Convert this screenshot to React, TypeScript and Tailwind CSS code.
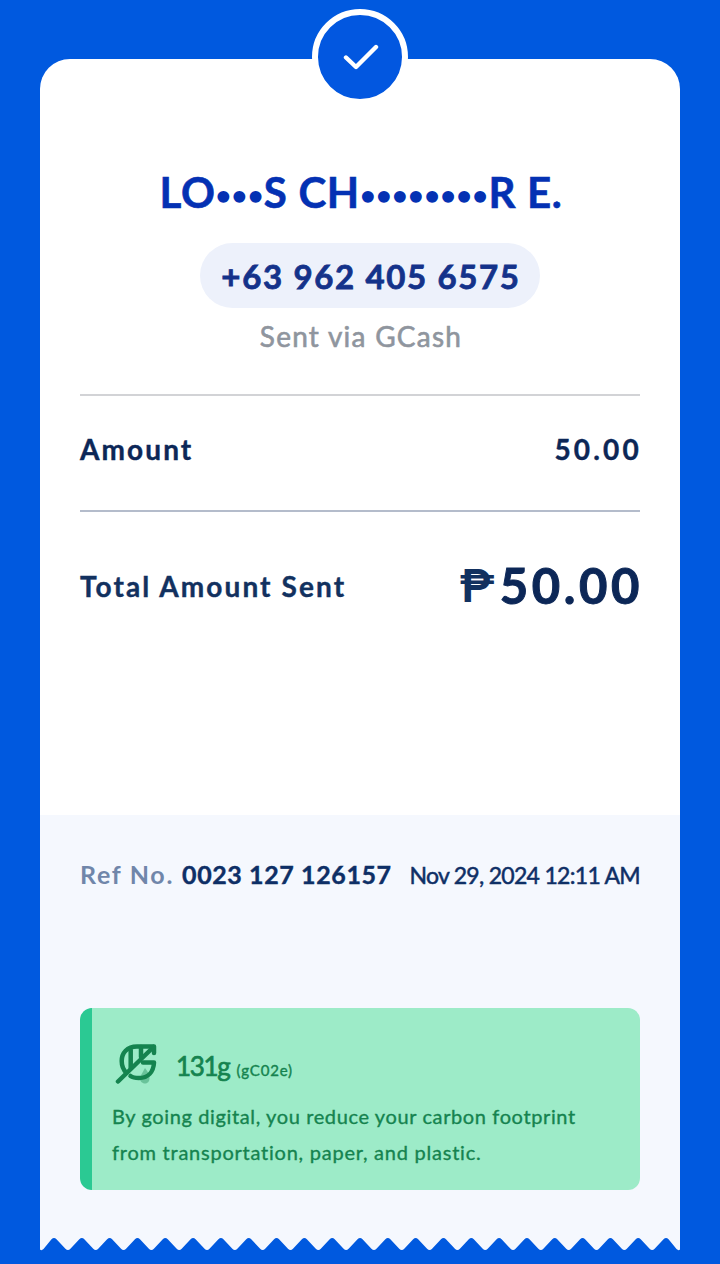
const TOOTH = 27.82

// torn paper edge, teeth with slightly rounded tips
function tearPath() {
    let d = 'M0 0H640V11.5Q638.5 13 636.5 11'
    for (let i = 22; i >= 0; i--) {
        const x = 14 + i * TOOTH
        d += `L${x + 2.5} 1.2Q${x} -1 ${x - 2.5} 1.2`
        if (i > 0) {
            d += `L${x - 11.4} 10.8Q${x - 13.9} 13.2 ${x - 16.4} 10.8`
        }
    }
    return d + 'L3.5 11Q1.5 13 0 11.5Z'
}

function Divider({ className }: { className: string }) {
    return <div className={`h-[2px] w-full ${className}`} />
}

function MaskDots({ count }: { count: number }) {
    return <span className="text-[27px] leading-none tracking-[0.4px] align-[3.500px] [-webkit-text-stroke:0px]">{'•'.repeat(count)}</span>
}

function CheckBadge() {
    return (
        <div className="absolute left-1/2 -top-[50px] -translate-x-1/2 w-24 h-24 rounded-full border-[6px] border-white bg-[#0257e0] flex items-center justify-center">
            <svg className="ml-0.5" width="36" height="26" viewBox="0 0 36 26" fill="none" stroke="white" strokeWidth="4.4" strokeLinecap="round" strokeLinejoin="round">
                <path d="M3 13.5L13 23L33 3" />
            </svg>
        </div>
    )
}

function LeafIcon() {
    return (
        <svg className="ml-[3px]" width="44" height="44" viewBox="0 0 44 44" fill="none" stroke="#15834f" strokeWidth="4.5" strokeLinecap="round" strokeLinejoin="round">
            <path d="M30 26C33 30 34.500 32 34.500 36C34.500 39 33 41.500 30 41.500C27 41.500 25 39 24.500 36Z" fill="#15834f" fillOpacity=".38" stroke="none" />
            <path d="M3 39.500L38.500 5" />
            <path d="M39 11V4.500H22C12 4.500 6.700 11 6.700 19C6.700 24 8.500 28 11.500 31" />
            <path d="M28 20.500H39C38.500 30 33 36 24 36C20 36 17.500 35.500 15.500 34" />
            <path d="M15.700 8V26M26 5V15" />
        </svg>
    )
}

export default function App() {
    return (
        <div className="w-[720px] h-[1264px] bg-[#0059df] px-10 pt-[59px] font-['Lato','Liberation_Sans',sans-serif] overflow-hidden">
            <div className="relative bg-white rounded-t-[30px] h-[756px] px-10 pt-[107px] [stroke-linejoin:round]">
                <CheckBadge />
                <div className="flex flex-col items-center">
                    <h1 className="ml-0.5 h-[52px] text-[42px] leading-[52px] font-bold tracking-[0.7px] text-[#0431b3] whitespace-nowrap [-webkit-text-stroke:0.6px]">
                        LO<MaskDots count={3} />S CH<MaskDots count={8} />R E.
                    </h1>
                    <div className="mt-[25px] ml-5 w-[340px] h-[65px] rounded-full bg-[#edf1fb] flex items-center justify-center">
                        <span className="mt-0.5 ml-0.5 text-[33px] font-bold tracking-[1.65px] text-[#14328a] [-webkit-text-stroke:0.8px]">+63 962 405 6575</span>
                    </div>
                    <p className="mt-2.5 ml-0.5 text-[28px] leading-9 tracking-[1.25px] text-[#8f959e] [-webkit-text-stroke:0.6px]">Sent via GCash</p>
                </div>
                <Divider className="mt-10 bg-[#d2d3d6]" />
                <div className="h-[114px] pb-2 flex justify-between items-center text-[28px] font-bold text-[#0c2757] [-webkit-text-stroke:0.4px]">
                    <span className="tracking-[2.1px]">Amount</span>
                    <span className="tracking-[3.2px] -mr-[2px]">50.00</span>
                </div>
                <Divider className="bg-[#b4bccb]" />
                <div className="h-[148px] flex justify-between items-center text-[#0c2757]">
                    <span className="text-[28px] font-bold tracking-[2.1px] text-[#12315f] [-webkit-text-stroke:0.4px]">Total Amount Sent</span>
                    <div className="flex items-center gap-[5px] text-[49px] font-bold">
                        <span className="font-['Roboto'] text-[47px] leading-none font-semibold text-[#12315f] -mt-0.5">₱</span>
                        <span className="tracking-[3.6px] -mr-[3px] [-webkit-text-stroke:1px]">50.00</span>
                    </div>
                </div>
            </div>
            <div className="bg-[#f5f8fe] h-[423px] px-10 pt-[42px] [stroke-linejoin:round]">
                <div className="flex justify-between items-center h-9 whitespace-nowrap text-[#0e2f66]">
                    <div className="flex items-center gap-2 text-[25px] font-bold">
                        <span className="tracking-[1.7px] text-[#7086aa]">Ref No.</span>
                        <span className="tracking-[0.6px] [-webkit-text-stroke:0.4px]">0023 127 126157</span>
                    </div>
                    <span className="text-[23px] tracking-[-0.7px] [-webkit-text-stroke:0.5px]">Nov 29, 2024 12:11 AM</span>
                </div>
                <div className="mt-[115px] h-[182px] rounded-[12px] overflow-hidden bg-[#9debc8] border-l-[12px] border-[#2bc993] pl-5 pt-8 text-[#15834f]">
                    <div className="flex items-end gap-[17px] h-[46px] [-webkit-text-stroke:0.4px]">
                        <LeafIcon />
                        <div className="flex items-baseline gap-[7px]">
                            <span className="text-[26px] tracking-[-1.3px] [-webkit-text-stroke:0.7px]">131g</span>
                            <span className="text-[15px] tracking-[0.8px]">(gC02e)</span>
                        </div>
                    </div>
                    <p className="mt-3 text-[20px] leading-9 tracking-[0.62px] [-webkit-text-stroke:0.35px]">
                        By going digital, you reduce your carbon footprint
                        <br />
                        <span className="tracking-[0.76px]">from transportation, paper, and plastic.</span>
                    </p>
                </div>
            </div>
            <svg className="block" width="640" height="14" viewBox="0 0 640 14">
                <path d={tearPath()} fill="#f5f8fe" />
            </svg>
        </div>
    )
}
